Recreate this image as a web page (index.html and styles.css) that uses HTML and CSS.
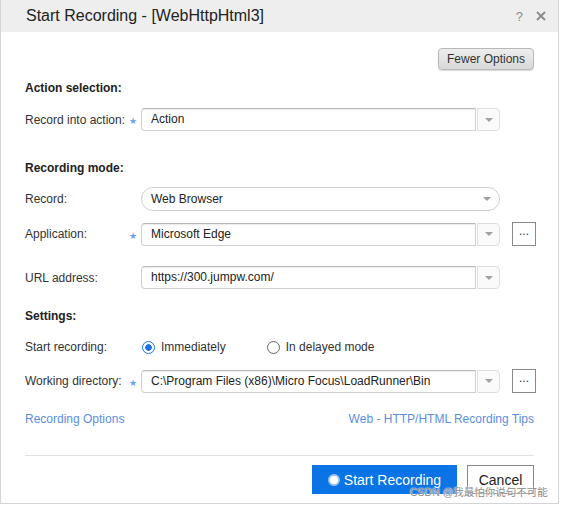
FILE: index.html
```html
<!DOCTYPE html>
<html lang="en">
<head>
    <meta charset="UTF-8">
    <title>Start Recording</title>
    <link rel="stylesheet" href="styles.css">
</head>
<body>
    <div class="dialog">
        <div class="titlebar">
            <span class="title">Start Recording - [WebHttpHtml3]</span>
            <span class="tools">
                <span class="help">?</span>
                <svg class="close" width="10" height="10" viewBox="0 0 10 10"><path d="M1 1L9 9M9 1L1 9" stroke="#8a8a8a" stroke-width="1.8"/></svg>
            </span>
        </div>
        <div class="body">
            <div class="top-actions">
                <button class="fewer">Fewer Options</button>
            </div>

            <h3 class="section first">Action selection:</h3>
            <div class="row r-action">
                <label>Record into action:</label>
                <span class="star">&#9733;</span>
                <div class="combo">
                    <div class="combo-input">Action</div>
                    <div class="combo-btn"><span class="arrow"></span></div>
                </div>
            </div>

            <h3 class="section s-mode">Recording mode:</h3>
            <div class="row r-record">
                <label>Record:</label>
                <span></span>
                <div class="pill">Web Browser<span class="arrow"></span></div>
            </div>
            <div class="row r-app">
                <label>Application:</label>
                <span class="star">&#9733;</span>
                <div class="combo">
                    <div class="combo-input">Microsoft Edge</div>
                    <div class="combo-btn"><span class="arrow"></span></div>
                </div>
                <span></span>
                <button class="browse">...</button>
            </div>
            <div class="row r-url">
                <label>URL address:</label>
                <span></span>
                <div class="combo">
                    <div class="combo-input">https://300.jumpw.com/</div>
                    <div class="combo-btn"><span class="arrow"></span></div>
                </div>
            </div>

            <h3 class="section s-settings">Settings:</h3>
            <div class="row r-start">
                <label>Start recording:</label>
                <span></span>
                <div class="radios">
                    <span class="radio checked"></span><span class="radio-label">Immediately</span>
                    <span class="radio second"></span><span class="radio-label">In delayed mode</span>
                </div>
            </div>
            <div class="row r-dir">
                <label>Working directory:</label>
                <span class="star">&#9733;</span>
                <div class="combo">
                    <div class="combo-input">C:\Program Files (x86)\Micro Focus\LoadRunner\Bin</div>
                    <div class="combo-btn"><span class="arrow"></span></div>
                </div>
                <span></span>
                <button class="browse">...</button>
            </div>

            <div class="links">
                <a href="#">Recording Options</a>
                <a href="#">Web - HTTP/HTML Recording Tips</a>
            </div>

            <div class="footer">
                <button class="primary"><span class="rec-dot"></span>Start Recording</button>
                <button class="cancel">Cancel</button>
            </div>
        </div>
        <div class="watermark">CSDN @我最怕你说句不可能</div>
    </div>
</body>
</html>
```

FILE: styles.css
```css
body {
    margin: 0;
    padding: 0;
    background-color: #fff;
    font-family: "Liberation Sans", Arial, sans-serif;
    color: #222;
}
.dialog {
    position: relative;
    width: 557px;
    height: 503px;
    border: 1px solid #d4d4d4;
    border-top: none;
    background-color: #fff;
}
.titlebar {
    height: 32px;
    background-color: #eeeeee;
    display: flex;
    align-items: center;
    justify-content: space-between;
    padding: 0 12px 0 25px;
}
.title {
    font-size: 16px;
    color: #222;
}
.tools {
    display: flex;
    align-items: center;
    gap: 13px;
}
.help {
    font-size: 13px;
    color: #8a8a8a;
}
.body {
    padding: 16px 24px 0 24px;
}
.top-actions {
    display: flex;
    justify-content: flex-end;
}
.fewer {
    font-family: inherit;
    font-size: 12px;
    color: #333;
    height: 22px;
    width: 96px;
    padding: 0;
    background: linear-gradient(#eeeeee, #d8d8d8);
    border: 1px solid #b8b8b8;
    border-radius: 4px;
    box-shadow: 0 1px 1px rgba(0, 0, 0, 0.15);
}
.section {
    font-size: 12px;
    font-weight: bold;
    margin: 0;
    line-height: 16px;
    color: #222;
}
.section.first { margin-top: 10px; }
.section.s-mode { margin-top: 29px; }
.section.s-settings { margin-top: 19px; }
.row {
    display: grid;
    grid-template-columns: 103px 13px 359px 12px 24px;
    align-items: center;
    font-size: 12px;
}
.row label {
    color: #333;
    white-space: nowrap;
}
.r-action { margin-top: 12px; }
.r-record { margin-top: 11px; }
.r-app { margin-top: 11px; }
.r-url { margin-top: 20px; }
.r-start { margin-top: 13px; height: 20px; }
.r-dir { margin-top: 12px; }
.star {
    color: #6d9ef0;
    font-size: 9px;
    padding-left: 1px;
    padding-top: 3px;
}
.combo {
    display: flex;
    height: 23px;
}
.combo-input {
    flex: 1;
    border: 1px solid #d0d0d0;
    border-top-color: #b9b9b9;
    border-radius: 4px 0 0 4px;
    box-shadow: inset 0 1px 1px rgba(0, 0, 0, 0.08);
    padding-left: 9px;
    line-height: 21px;
    white-space: nowrap;
    overflow: hidden;
}
.combo-btn {
    width: 21px;
    margin-left: 1px;
    border: 1px solid #dedede;
    border-radius: 0 4px 4px 0;
    background-color: #fafafa;
    display: flex;
    align-items: center;
    justify-content: center;
}
.arrow {
    width: 0;
    height: 0;
    border-left: 4px solid transparent;
    border-right: 4px solid transparent;
    border-top: 4px solid #a0a0a0;
}
.pill {
    height: 22px;
    border: 1px solid #cfcfcf;
    border-radius: 12px;
    padding: 0 8px 0 9px;
    display: flex;
    align-items: center;
    justify-content: space-between;
}
.browse {
    width: 24px;
    height: 24px;
    padding: 0 0 6px 0;
    border: 1px solid #8a8a8a;
    background-color: #fff;
    font-family: inherit;
    font-size: 12px;
    color: #333;
}
.radios {
    display: flex;
    align-items: center;
    grid-column: 3 / 6;
}
.radio {
    box-sizing: border-box;
    width: 13px;
    height: 13px;
    border: 1px solid #666;
    border-radius: 50%;
    margin-left: 1px;
}
.radio.checked {
    border-color: #1a73e8;
    background: radial-gradient(circle, #1a73e8 0 3px, #fff 3.5px);
}
.radio.second {
    margin-left: 41px;
}
.radio-label {
    margin-left: 6px;
    color: #333;
}
.links {
    display: flex;
    justify-content: space-between;
    margin-top: 19px;
    font-size: 12px;
}
.links a {
    color: #5a8ee3;
    text-decoration: none;
}
.footer {
    margin-top: 29px;
    border-top: 1px solid #e2e2e2;
    padding-top: 9px;
    display: flex;
    justify-content: flex-end;
    gap: 10px;
}
.primary {
    width: 145px;
    height: 29px;
    border: none;
    background-color: #0a73e6;
    color: #fff;
    font-family: inherit;
    font-size: 14px;
    display: flex;
    align-items: center;
    justify-content: center;
    gap: 4px;
}
.rec-dot {
    box-sizing: border-box;
    width: 12px;
    height: 12px;
    border-radius: 50%;
    background-color: #fff;
    border: 2px solid #9cc6f4;
}
.cancel {
    width: 67px;
    height: 29px;
    border: 1px solid #888;
    background-color: #fff;
    color: #222;
    font-family: inherit;
    font-size: 14px;
}
.watermark {
    position: absolute;
    left: 409px;
    top: 484px;
    font-size: 10.5px;
    color: #8c8c8c;
    font-family: "Liberation Sans", "Noto Sans CJK SC", sans-serif;
    text-shadow: 0 0 2px #fff, 0 0 1px #fff;
    white-space: nowrap;
}
```
